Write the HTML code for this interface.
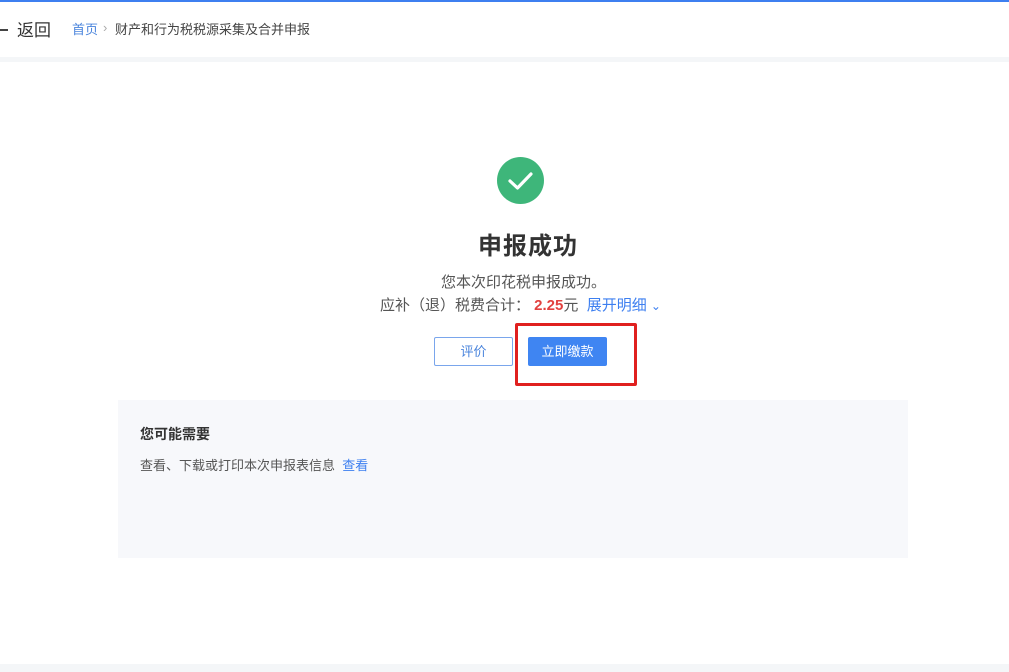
<!DOCTYPE html>
<html><head><meta charset="utf-8"><style>
*{margin:0;padding:0;box-sizing:border-box}
body{width:1009px;height:672px;background:#fff;font-family:"Liberation Sans","Noto Sans CJK SC",sans-serif;position:relative;overflow:hidden;color:#333}
.a{position:absolute}
</style></head><body>
<div class="a" style="left:0;top:0;width:1009px;height:2px;background:#3d7ff0"></div>
<div class="a" style="left:0;top:29px;width:8px;height:2px;background:#444"></div>
<div class="a" style="left:17px;top:16px;font-size:17px;color:#333">返回</div>
<div class="a" style="left:72px;top:19px;font-size:13px;color:#4a84dc">首页</div>
<div class="a" style="left:103px;top:20px;font-size:13px;color:#aaa">›</div>
<div class="a" style="left:115px;top:19px;font-size:13px;color:#444">财产和行为税税源采集及合并申报</div>
<div class="a" style="left:0;top:57px;width:1009px;height:5px;background:#f4f6f8"></div>
<div class="a" style="left:0;top:664px;width:1009px;height:8px;background:#f4f6f8"></div>
<div class="a" style="left:497px;top:157px;width:47px;height:47px;border-radius:50%;background:#3eb67a"></div>
<svg class="a" style="left:497px;top:157px" width="47" height="47"><path d="M13 24 L20.5 31 L34 17" stroke="#fff" stroke-width="3.2" fill="none" stroke-linecap="round" stroke-linejoin="round"/></svg>
<div class="a" style="left:478px;top:226px;font-size:24px;font-weight:bold;color:#333;white-space:nowrap;letter-spacing:1px">申报成功</div>
<div class="a" style="left:441px;top:271px;font-size:15px;color:#555;white-space:nowrap">您本次印花税申报成功。</div>
<div class="a" style="left:380px;top:294px;font-size:15px;color:#555;white-space:nowrap">应补（退）税费合计：&nbsp;<b style="color:#e2413f;font-size:15px">2.25</b>元&nbsp;&nbsp;<span style="color:#3d7ff0">展开明细</span> <span style="color:#3d7ff0;font-size:12px">⌄</span></div>
<div class="a" style="left:434px;top:337px;width:79px;height:29px;border:1px solid #7aa6ec;border-radius:2px;color:#4a84dc;font-size:13px;text-align:center;line-height:27px">评价</div>
<div class="a" style="left:528px;top:337px;width:79px;height:29px;background:#3f85f2;border-radius:2px;color:#fff;font-size:13px;text-align:center;line-height:29px">立即缴款</div>
<div class="a" style="left:515px;top:323px;width:122px;height:63px;border:3px solid #e0201f;border-radius:2px"></div>
<div class="a" style="left:118px;top:400px;width:790px;height:158px;background:#f7f8fb"></div>
<div class="a" style="left:140px;top:424px;font-size:14px;font-weight:bold;color:#333">您可能需要</div>
<div class="a" style="left:140px;top:455px;font-size:13px;color:#555;white-space:nowrap">查看、下载或打印本次申报表信息&nbsp;&nbsp;<span style="color:#3d7ff0">查看</span></div>
</body></html>
